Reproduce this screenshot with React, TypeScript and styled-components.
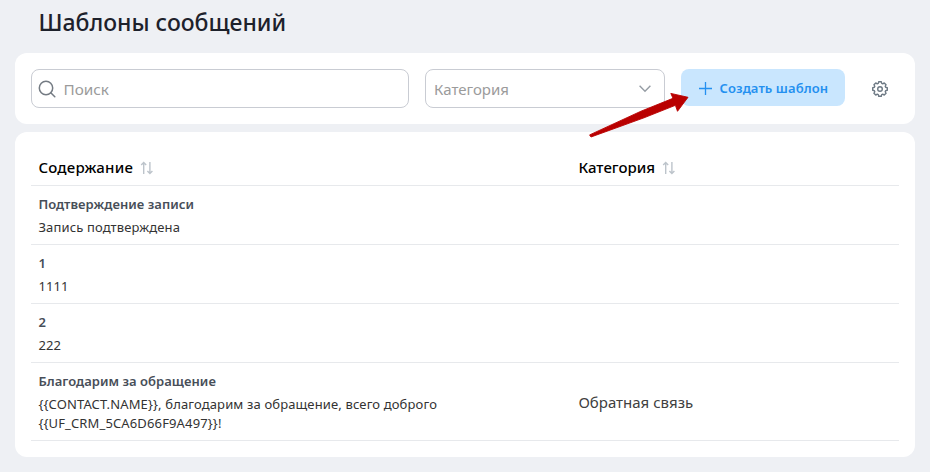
import React from 'react';
import styled, { createGlobalStyle } from 'styled-components';

const GlobalStyle = createGlobalStyle`
  * { box-sizing: border-box; }
  body {
    margin: 0;
    background: #eef0f4;
    font-family: "Noto Sans", "Open Sans", sans-serif;
    color: #333;
  }
`;

const Page = styled.main`
  position: relative;
  height: 472px;
  padding: 0 15px;
  overflow: hidden;
`;

const Title = styled.h1`
  margin: 0;
  height: 53px;
  padding: 6px 0 0 23.5px;
  font-size: 23px;
  line-height: 32px;
  font-weight: 550;
  letter-spacing: 0;
  color: #1d212b;
`;

const Card = styled.section`
  background: #fff;
  border-radius: 12px;
`;

const Toolbar = styled(Card)`
  display: flex;
  align-items: flex-start;
  height: 71px;
  padding: 16px;
  gap: 16px;
`;

const Field = styled.div<{ $width: number }>`
  display: flex;
  align-items: center;
  width: ${(p) => p.$width}px;
  height: 39px;
  border: 1px solid #c9ccd3;
  border-radius: 8px;
  color: #959ca4;
`;

const SearchField = styled(Field)`
  padding-left: 5.5px;
  gap: 8px;
`;

const SelectField = styled(Field)`
  justify-content: space-between;
  padding: 0 12px 0 8px;
`;

const Placeholder = styled.span<{ $size: number }>`
  font-size: ${(p) => p.$size}px;
  line-height: 21px;
  padding-top: 2px;
  color: #9b9b9b;
`;

const CreateButton = styled.button`
  display: flex;
  align-items: center;
  width: 164px;
  height: 37px;
  padding: 1px 0 0 16.5px;
  gap: 7px;
  border: 0;
  border-radius: 8px;
  background: #c9e6fe;
  color: #2490f0;
  font: 600 13px/20px "Noto Sans", sans-serif;
  letter-spacing: 0.09px;
`;

const SettingsButton = styled.button`
  display: flex;
  width: 18px;
  height: 18px;
  margin: 11px 0 0 10px;
  padding: 0;
  border: 0;
  background: none;
`;

const TableCard = styled(Card)`
  height: 325px;
  margin-top: 8px;
  padding: 16px 16px 0;
`;

const Row = styled.div`
  display: grid;
  grid-template-columns: 540px 1fr;
  align-items: center;
  padding: 9px 0 7px 7.4px;
  border-bottom: 1px solid #e7e9ec;
`;

const HeadRow = styled(Row)`
  height: 38px;
  padding: 2px 0 0 7.4px;
`;

const HeadCell = styled.div<{ $spacing: number }>`
  display: flex;
  align-items: center;
  gap: 7px;
  font-size: 15px;
  line-height: 21px;
  font-weight: 550;
  letter-spacing: ${(p) => p.$spacing}px;
  color: #000;
`;

const Content = styled.div`
  display: flex;
  flex-direction: column;
  gap: 4px;
  font-size: 13px;
  line-height: 19px;
  letter-spacing: 0.14px;
`;

const Name = styled.div`
  font-weight: 560;
  letter-spacing: 0.04px;
  color: #474e58;
`;

const Body = styled.div`
  white-space: pre-line;
  color: #333;
`;

const Category = styled.div`
  font-size: 15px;
  line-height: 21px;
  color: #404040;
`;

const Pointer = styled.svg`
  position: absolute;
  left: 585px;
  top: 88px;
  pointer-events: none;
`;

const SearchIcon = () => (
  <svg width="18" height="18" viewBox="0 0 18 18" fill="none" stroke="#747b83" strokeWidth="1.5" strokeLinecap="round">
    <circle cx="8" cy="8" r="6.7" />
    <path d="M12.8 12.8 L16.8 16.8" />
  </svg>
);

const ChevronIcon = () => (
  <svg width="14" height="10" viewBox="0 0 14 10" fill="none" stroke="#959ca4" strokeWidth="1.4">
    <path d="M1.6 1.8 L7 7.2 L12.4 1.8" />
  </svg>
);

const PlusIcon = () => (
  <svg width="15" height="15" viewBox="0 0 15 15" fill="none" stroke="#2490f0" strokeWidth="1.3">
    <path d="M7.5 1 V14 M1 7.5 H14" />
  </svg>
);

const SortIcon = () => (
  <svg width="14" height="14" viewBox="0 0 14 14" fill="none" stroke="#bdc4cb" strokeWidth="1.4">
    <path d="M3.7 13 V1.6 M1.2 4.1 L3.7 1.5 L6.2 4.1 M9.9 1 V12.4 M7.4 9.9 L9.9 12.5 L12.4 9.9" />
  </svg>
);

const GEAR_TEETH = 8;
const gearPath = (() => {
  const pts: string[] = [];
  const at = (deg: number, r: number) => {
    const a = (deg * Math.PI) / 180;
    return `${(9 + r * Math.cos(a)).toFixed(2)} ${(9 + r * Math.sin(a)).toFixed(2)}`;
  };
  for (let i = 0; i < GEAR_TEETH; i++) {
    const d = (i * 360) / GEAR_TEETH;
    pts.push(at(d - 10, 7.4), at(d + 10, 7.4), at(d + 17, 5.9), at(d + 28, 5.9));
  }
  return `M${pts.join(' L')} Z`;
})();

const GearIcon = () => (
  <svg width="18" height="18" viewBox="0 0 18 18" fill="none" stroke="#6d7984" strokeWidth="1.4" strokeLinejoin="round">
    <path d={gearPath} />
    <circle cx="9" cy="9" r="2.3" />
  </svg>
);

const templates = [
  { name: 'Подтверждение записи', body: 'Запись подтверждена', category: '' },
  { name: '1', body: '1111', category: '' },
  { name: '2', body: '222', category: '' },
  {
    name: 'Благодарим за обращение',
    body: '{{CONTACT.NAME}}, благодарим за обращение, всего доброго\n{{UF_CRM_5CA6D66F9A497}}!',
    category: 'Обратная связь',
  },
];

export default function App() {
  return (
    <Page>
      <GlobalStyle />
      <Title>Шаблоны сообщений</Title>
      <Toolbar>
        <SearchField $width={378}>
          <SearchIcon />
          <Placeholder $size={15.3}>Поиск</Placeholder>
        </SearchField>
        <SelectField $width={240}>
          <Placeholder $size={15}>Категория</Placeholder>
          <ChevronIcon />
        </SelectField>
        <CreateButton>
          <PlusIcon />
          <span>Создать шаблон</span>
        </CreateButton>
        <SettingsButton aria-label="Настройки">
          <GearIcon />
        </SettingsButton>
      </Toolbar>
      <TableCard>
        <HeadRow>
          <HeadCell $spacing={0.22}>
            Содержание <SortIcon />
          </HeadCell>
          <HeadCell $spacing={0.03}>
            Категория <SortIcon />
          </HeadCell>
        </HeadRow>
        {templates.map((t) => (
          <Row key={t.name}>
            <Content>
              <Name>{t.name}</Name>
              <Body>{t.body}</Body>
            </Content>
            <Category>{t.category}</Category>
          </Row>
        ))}
      </TableCard>
      <Pointer width="110" height="54" viewBox="585 88 110 54">
        <path
          d="M589.6 134.9 L641 111.2 L673 98.3 L670.8 93.4 L688 97.3 L677.5 111.3 L675.4 105.3 L644 117.8 L591 137 Z"
          fill="#b90000"
          stroke="#b90000"
          strokeWidth="0.9"
          strokeLinejoin="round"
        />
      </Pointer>
    </Page>
  );
}
